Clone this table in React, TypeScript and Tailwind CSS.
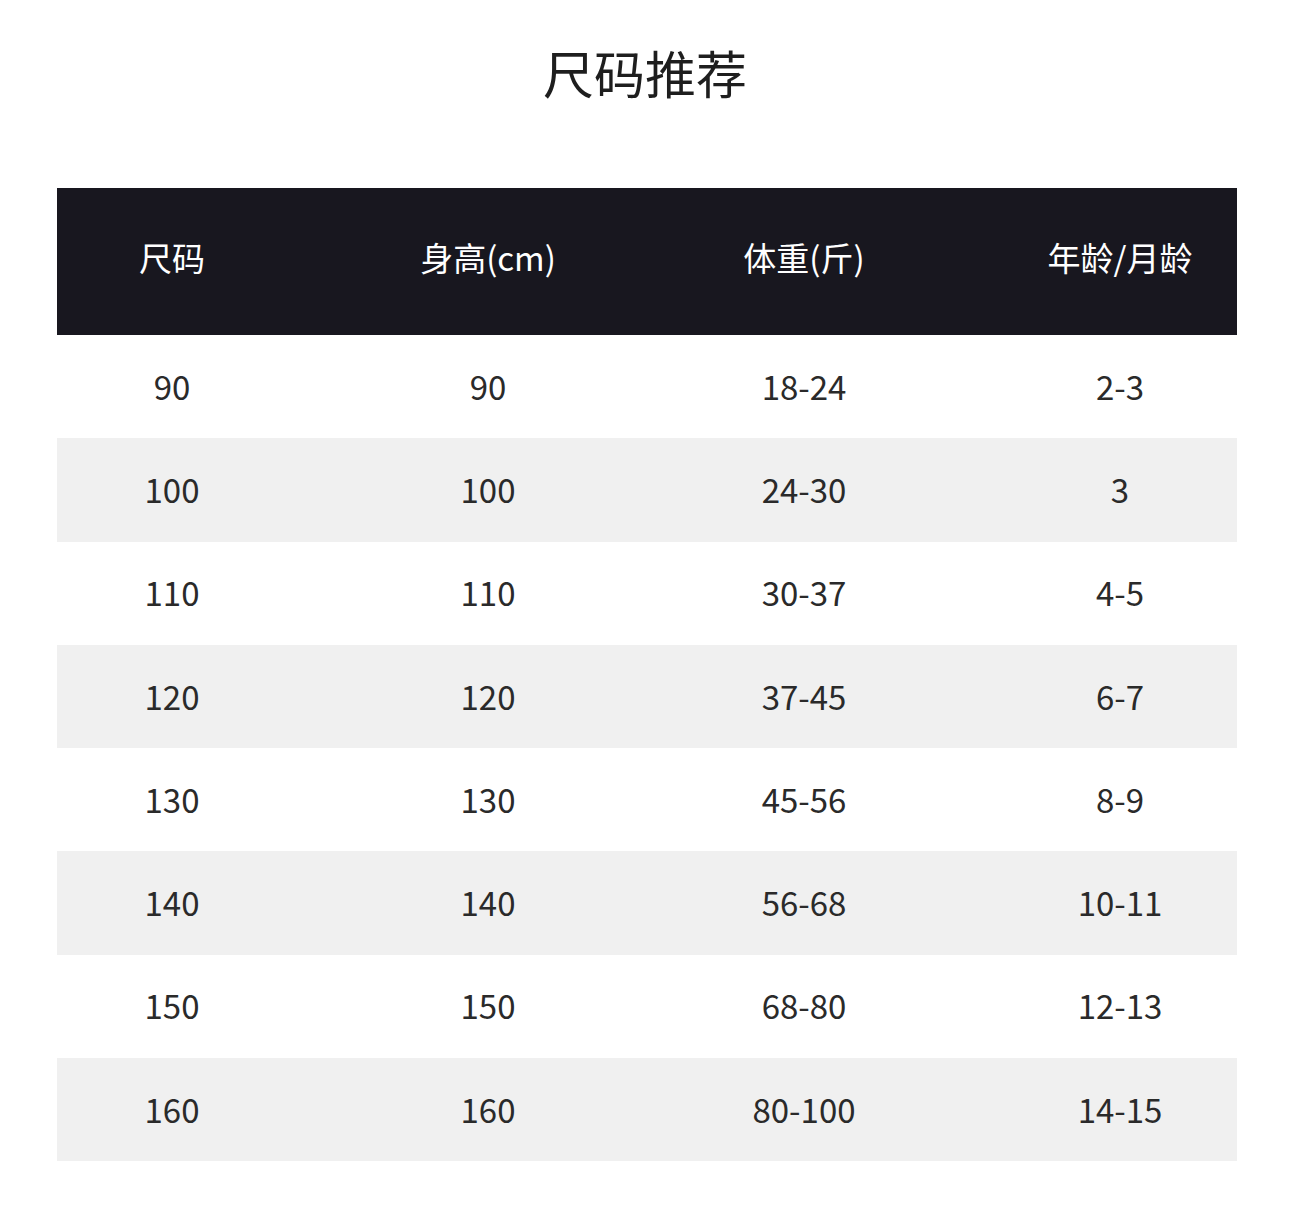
import React from "react";

const rows = [
  ["90", "90", "18-24", "2-3"],
  ["100", "100", "24-30", "3"],
  ["110", "110", "30-37", "4-5"],
  ["120", "120", "37-45", "6-7"],
  ["130", "130", "45-56", "8-9"],
  ["140", "140", "56-68", "10-11"],
  ["150", "150", "68-80", "12-13"],
  ["160", "160", "80-100", "14-15"],
];

const headers = ["尺码", "身高(cm)", "体重(斤)", "年龄/月龄"];

export default function App() {
  return (
    <div
      className="w-[1290px] h-[1206px] bg-white"
      style={{ fontFamily: '"Noto Sans CJK SC", "Noto Sans", sans-serif' }}
    >
      <div className="h-[188px] flex justify-center pt-[41px]">
        <div className="text-[51px] leading-[62px] text-[#1e1e1e]">尺码推荐</div>
      </div>
      <div className="mx-[57px] w-[1180px]">
        <div className="h-[147px] pb-[7px] bg-[#18171f] grid grid-cols-[230px_230px_230px_230px] gap-x-[86px] items-center text-white text-[33px]">
          {headers.map((h) => (
            <div key={h} className="text-center">
              {h}
            </div>
          ))}
        </div>
        {rows.map((r, i) => (
          <div
            key={i}
            className={`h-[103.25px] grid grid-cols-[230px_230px_230px_230px] gap-x-[86px] items-center text-[33px] text-[#2a2a2a] ${
              i % 2 === 1 ? "bg-[#f0f0f0]" : "bg-white"
            }`}
          >
            {r.map((c, j) => (
              <div key={j} className="text-center">
                {c}
              </div>
            ))}
          </div>
        ))}
      </div>
    </div>
  );
}
